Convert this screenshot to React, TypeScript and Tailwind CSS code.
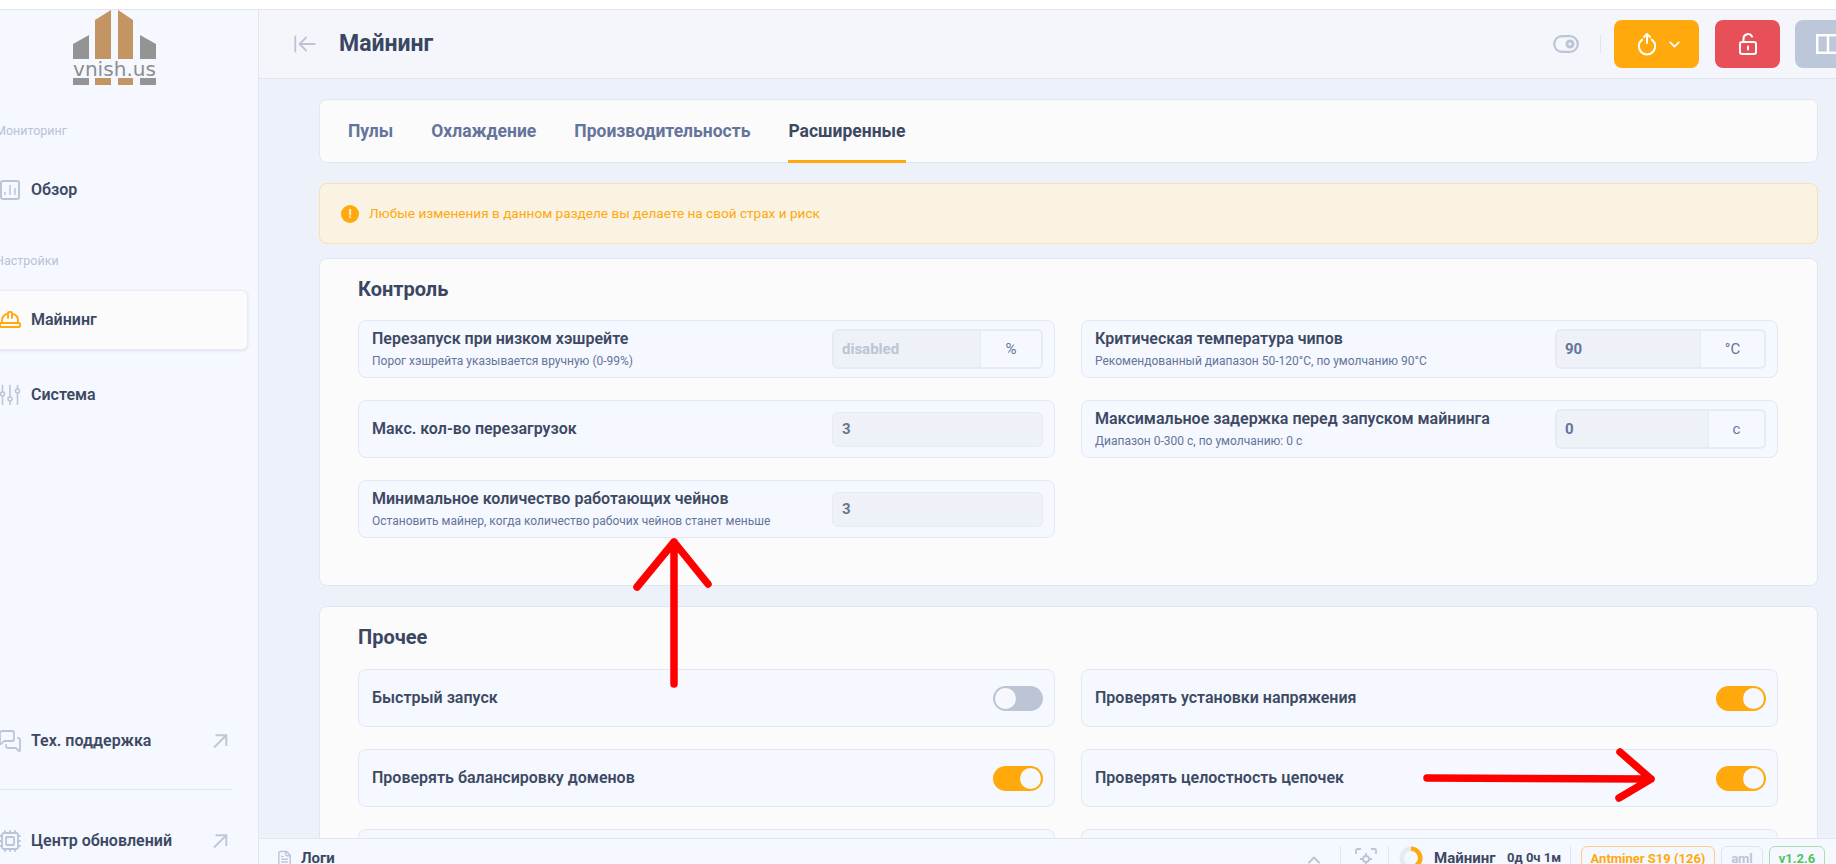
import React from "react";
import { ArrowLeftToLine, ChevronDown, ChevronUp, Cpu, FileText, HardHat, MessagesSquare } from "lucide-react";

const Logo = () => (
  <svg width="84" height="76" viewBox="0 0 84 76" className="block">
    <polygon points="0,34 16,25 16,49 0,49" fill="#949494" />
    <polygon points="22,10 38,0 38,49 22,49" fill="#c29562" />
    <polygon points="45,0 60,10 60,49 45,49" fill="#c29562" />
    <polygon points="67,25 83,34 83,49 67,49" fill="#949494" />
    <text x="0" y="66" textLength="83" lengthAdjust="spacingAndGlyphs" fill="#8e8e8e" fontFamily="'DejaVu Sans', sans-serif" fontWeight="500" fontSize="20">vnish.us</text>
    <rect x="0" y="68" width="16" height="7" fill="#949494" />
    <rect x="22" y="68" width="16" height="7" fill="#c29562" />
    <rect x="45" y="68" width="15" height="7" fill="#c29562" />
    <rect x="67" y="68" width="16" height="7" fill="#949494" />
  </svg>
);

const ArrowOut = () => (
  <svg width="16" height="16" viewBox="0 0 16 16" fill="none" stroke="#bfc7d6" strokeWidth="2" className="ml-auto mr-[30px] shrink-0">
    <path d="M2 14.500 14 2.500M3.500 2.200H14.300V13" />
  </svg>
);

const ChartIcon = () => (
  <svg width="20" height="22" viewBox="0 0 20 22" fill="none" stroke="#bcc5d5" strokeWidth="2" className="shrink-0">
    <rect x="1" y="2" width="18" height="18" rx="2" />
    <path d="M5 16v-3M10 16V6M15 16V9" strokeWidth="1.500" />
  </svg>
);

const SlidersIcon = () => (
  <svg width="20" height="22" viewBox="0 0 20 22" fill="none" stroke="#bcc5d5" strokeWidth="1.600" className="shrink-0">
    <path d="M2.500 1v7M2.500 12v9M10 1v12M10 17v4M17.500 1v4M17.500 9v12" />
    <circle cx="2.500" cy="10" r="2" />
    <circle cx="10" cy="15" r="2" />
    <circle cx="17.500" cy="7" r="2" />
  </svg>
);

const SideItem = ({ icon, label, extra, active }: { icon: React.ReactNode; label: string; extra?: React.ReactNode; active?: boolean }) => (
  <div className={"flex h-[60px] shrink-0 items-center gap-[11px] text-[16px] font-semibold text-[#3d4963] " + (active ? "-ml-3 w-[260px] rounded-md border border-[#e7ebf3] bg-[#fbfbfc] pl-[11px] shadow-[0_1px_3px_rgba(60,75,110,0.12)]" : "")}>
    {icon}
    <span>{label}</span>
    {extra}
  </div>
);

const Sidebar = () => (
  <aside className="flex w-[259px] shrink-0 flex-col overflow-hidden border-r border-[#e1e7f1] bg-[#f5f8ff]">
    <div className="h-[111px] shrink-0 pl-[73px]">
      <Logo />
    </div>
    <div className="-ml-[5px] h-5 shrink-0 text-[12.5px] leading-5 text-[#b9c3d3]">Мониторинг</div>
    <div className="mt-[19px] shrink-0">
      <SideItem icon={<ChartIcon />} label="Обзор" />
    </div>
    <div className="-ml-[5px] mt-[31px] h-5 shrink-0 text-[12.5px] leading-5 text-[#b9c3d3]">Настройки</div>
    <div className="mt-[19px] shrink-0">
      <SideItem active icon={<HardHat size={24} color="#ffa90c" strokeWidth={1.900} className="-ml-[2px] -mr-[2px] shrink-0" />} label="Майнинг" />
    </div>
    <div className="mt-[15px] shrink-0">
      <SideItem icon={<SlidersIcon />} label="Система" />
    </div>
    <div className="mt-[286px] shrink-0">
      <SideItem icon={<MessagesSquare size={24} color="#bcc5d5" strokeWidth={1.800} className="-ml-[2px] -mr-[2px] shrink-0" />} label="Тех. поддержка" extra={<ArrowOut />} />
    </div>
    <div className="mt-[18px] h-px w-[233px] shrink-0 bg-[#e2e8f3]" />
    <div className="mt-[21px] shrink-0">
      <SideItem icon={<Cpu size={24} color="#bcc5d5" strokeWidth={1.800} className="-ml-[2px] -mr-[2px] shrink-0" />} label="Центр обновлений" extra={<ArrowOut />} />
    </div>
  </aside>
);

const Header = () => (
  <header className="flex h-[69px] shrink-0 items-center border-b border-[#dfe6f0] bg-[#f4f6fb]">
    <ArrowLeftToLine size={26} strokeWidth={1.700} color="#bcc5d5" className="ml-[33px]" />
    <h1 className="ml-[21px] text-[23px] font-bold text-[#3a4662]">Майнинг</h1>
    <div className="ml-auto flex items-center">
      <svg width="26" height="18" viewBox="0 0 26 18" fill="none" stroke="#bcc5d5" className="mr-[21px]">
        <rect x="1.200" y="1.200" width="23.600" height="15.600" rx="7.800" strokeWidth="2.200" />
        <circle cx="17" cy="9" r="3" strokeWidth="3" />
      </svg>
      <div className="mr-[13px] h-[18px] w-px bg-[#dfe4ee]" />
      <button className="flex h-12 w-[85px] items-center justify-center gap-[9px] rounded-lg bg-[#ffa90c] pl-[7px]">
        <svg width="20" height="24" viewBox="0 0 20 24" fill="none" stroke="white" strokeWidth="2" strokeLinecap="round" strokeLinejoin="round">
          <path d="M5.200 7.600a8.200 8.200 0 1 0 9.600 0M10 11V2.500M7 5l3-3 3 3" />
        </svg>
        <ChevronDown size={17} color="white" strokeWidth={2.600} />
      </button>
      <button className="ml-4 flex h-12 w-[65px] items-center justify-center rounded-lg bg-[#e75058]">
        <svg width="20" height="22" viewBox="0 0 20 22" fill="none" stroke="white" strokeWidth="2" strokeLinecap="round">
          <rect x="2" y="9" width="16" height="12" rx="2" />
          <path d="M5.500 9V5.500a4.500 4.500 0 0 1 8.500-2M10 13.500v3" />
        </svg>
      </button>
      <button className="-mr-6 ml-[15px] flex h-12 w-[65px] items-center justify-center rounded-lg bg-[#bcc8da]">
        <svg width="24" height="20" viewBox="0 0 24 20" fill="none" stroke="white" strokeWidth="2.500">
          <rect x="1.200" y="1.200" width="21.600" height="17.600" />
          <path d="M12 1v18" />
        </svg>
      </button>
    </div>
  </header>
);

const Tabs = () => (
  <div className="flex h-16 items-stretch gap-[38px] rounded-lg border border-[#e1e7f1] bg-[#fbfbfc] pl-7 text-[17.5px] font-bold text-[#64749a]">
    {["Пулы", "Охлаждение", "Производительность"].map((t) => (
      <div key={t} className="flex items-center">{t}</div>
    ))}
    <div className="-mb-px flex items-center border-b-[3px] border-[#ffa90c] pt-[3px] text-[#3d4963]">Расширенные</div>
  </div>
);

const Warning = () => (
  <div className="mt-5 flex h-[61px] items-center gap-[10px] rounded-lg border border-[#fbdfae] bg-[#faf2e3] pl-[21px] text-[13.6px] text-[#ffa90c]">
    <span className="flex h-[18px] w-[18px] items-center justify-center rounded-full bg-[#ffa90c] text-[12px] font-bold leading-none text-[#faf2e3]">!</span>
    Любые изменения в данном разделе вы делаете на свой страх и риск
  </div>
);

const Field = ({ value, unit, unitClass, muted }: { value: string; unit?: string; unitClass?: string; muted?: boolean }) => {
  if (!unit)
    return (
      <div className="flex h-[35px] w-[211px] shrink-0 items-center rounded-md border border-[#e6eaf4] bg-[#eef1f8] pl-[9px] text-[15px] font-bold text-[#64749a]">{value}</div>
    );
  return (
    <div className="flex h-10 w-[211px] shrink-0 overflow-hidden rounded-md border-2 border-[#e6eaf4]">
      <div className={"flex flex-1 items-center bg-[#eef1f8] pl-2 text-[15px] font-bold " + (muted ? "text-[#bcc5d5]" : "text-[#64749a]")}>{value}</div>
      <div className={"flex shrink-0 items-center justify-center border-l border-[#e6eaf4] bg-[#f5f8ff] text-[15px] text-[#64749a] " + unitClass}>{unit}</div>
    </div>
  );
};

const Row = ({ title, sub, children }: { title: string; sub?: string; children: React.ReactNode }) => (
  <div className="flex h-[58px] items-center justify-between rounded-lg border border-[#e2e8f4] bg-[#f5f8ff] pl-[13px] pr-[11px]">
    <div>
      <div className="text-[16px] font-semibold leading-5 text-[#3d4963]">{title}</div>
      {sub && <div className="mt-[4px] text-[12px] leading-4 text-[#64749a]">{sub}</div>}
    </div>
    {children}
  </div>
);

const Toggle = ({ on }: { on?: boolean }) => (
  <div className={"flex h-[25px] w-[50px] shrink-0 items-center rounded-full px-[2px] " + (on ? "justify-end bg-[#ffa90c]" : "justify-start bg-[#bcc5d5]")}>
    <div className="h-[21px] w-[21px] rounded-full bg-[#f6f8fd]" />
  </div>
);

const Main = () => (
  <main className="relative flex min-w-0 flex-1 flex-col overflow-hidden bg-[#edf1f9]">
    <Header />
    <div className="min-h-0 flex-1 overflow-hidden pl-[60px] pr-[18px] pt-5">
      <Tabs />
      <Warning />
      <section className="mt-[14px] h-[328px] rounded-lg border border-[#e1e7f1] bg-[#fbfbfc] pl-[38px] pr-[39px]">
        <h2 className="flex h-[61px] items-center pb-[2px] text-[20px] font-bold text-[#3a4662]">Контроль</h2>
        <div className="grid grid-cols-2 gap-x-[26px] gap-y-[22px]">
          <Row title="Перезапуск при низком хэшрейте" sub="Порог хэшрейта указывается вручную (0-99%)"><Field value="disabled" unit="%" unitClass="w-[61px]" muted /></Row>
          <Row title="Критическая температура чипов" sub="Рекомендованный диапазон 50-120°C, по умолчанию 90°C"><Field value="90" unit="°C" unitClass="w-[64px]" /></Row>
          <Row title="Макс. кол-во перезагрузок"><Field value="3" /></Row>
          <Row title="Максимальное задержка перед запуском майнинга" sub="Диапазон 0-300 с, по умолчанию: 0 с"><Field value="0" unit="с" unitClass="w-[56px]" /></Row>
          <Row title="Минимальное количество работающих чейнов" sub="Остановить майнер, когда количество рабочих чейнов станет меньше"><Field value="3" /></Row>
        </div>
      </section>
      <section className="mt-5 rounded-lg border border-[#e1e7f1] bg-[#fbfbfc] pb-6 pl-[38px] pr-[39px]">
        <h2 className="flex h-[62px] items-center pb-[2px] text-[20px] font-bold text-[#3a4662]">Прочее</h2>
        <div className="grid grid-cols-2 gap-x-[26px] gap-y-[22px]">
          <Row title="Быстрый запуск"><Toggle /></Row>
          <Row title="Проверять установки напряжения"><Toggle on /></Row>
          <Row title="Проверять балансировку доменов"><Toggle on /></Row>
          <Row title="Проверять целостность цепочек"><Toggle on /></Row>
          <Row title=" "><Toggle on /></Row>
          <Row title=" "><Toggle on /></Row>
        </div>
      </section>
    </div>
    <footer className="flex h-[26px] shrink-0 items-start overflow-hidden whitespace-nowrap border-t border-[#e1e7f1] bg-[#f5f8ff] pl-[17px] pt-[7px] text-[15px] font-bold text-[#3d4963]">
      <FileText size={17} color="#bcc5d5" strokeWidth={2} className="mt-1" />
      <span className="ml-[8px] mt-[1px]">Логи</span>
      <ChevronUp size={20} color="#bcc5d5" strokeWidth={2.400} className="ml-auto mt-1" />
      <div className="ml-[16px] h-7 w-px bg-[#e1e7f1]" />
      <svg width="22" height="22" viewBox="0 0 22 22" fill="none" stroke="#bcc5d5" strokeWidth="1.800" className="ml-[14px] mt-[2px]">
        <path d="M1 6V2.500A1.500 1.500 0 0 1 2.500 1H6M16 1h3.500A1.500 1.500 0 0 1 21 2.500V6M21 16v3.500a1.500 1.500 0 0 1-1.500 1.500H16M6 21H2.500A1.500 1.500 0 0 1 1 19.500V16" />
        <circle cx="11" cy="11" r="3" />
        <path d="M11 5v3M11 14v3M5 11h3M14 11h3" />
      </svg>
      <div className="ml-[11px] h-7 w-px bg-[#e1e7f1]" />
      <svg width="24" height="24" viewBox="0 0 26 26" fill="none" strokeWidth="5" className="ml-[10px] shrink-0">
        <circle cx="13" cy="13" r="10" stroke="#e6eaf4" />
        <path d="M13 3a10 10 0 0 1 6 18" stroke="#ffa90c" />
      </svg>
      <span className="ml-[11px] mt-[1px] w-[62px] shrink-0">Майнинг</span>
      <span className="ml-[11px] mt-[2px] w-[53px] shrink-0 text-[13px]">0д 0ч 1м</span>
      <div className="ml-[10px] h-7 w-px shrink-0 bg-[#e1e7f1]" />
      <span className="ml-[10px] flex h-[26px] w-[134px] shrink-0 items-center justify-center rounded-md border border-[#ffcf80] text-[13px] text-[#ffa90c]">Antminer S19 (126)</span>
      <span className="ml-[6px] flex h-[26px] w-[42px] shrink-0 items-center justify-center rounded-md border border-[#dde3ee] text-[13px] text-[#bcc5d5]">aml</span>
      <span className="ml-[6px] mr-[11px] flex h-[26px] w-[56px] shrink-0 items-center justify-center rounded-md border border-[#a5e0ae] text-[13px] text-[#4fc45f]">v1.2.6</span>
    </footer>
    <svg width="1836" height="864" viewBox="0 0 1836 864" fill="none" stroke="#ff0000" strokeWidth="7.500" strokeLinecap="round" strokeLinejoin="round" className="pointer-events-none absolute -left-[259px] -top-[10px]">
      <path d="M674 684V542M637 587 674 542 708 584" />
      <path d="M1427 778 1651 779M1620 752 1651 779 1619 798" />
    </svg>
  </main>
);

export default function App() {
  return (
    <div className="flex h-[864px] w-[1836px] flex-col overflow-hidden bg-white font-['Roboto',sans-serif]">
      <div className="h-[10px] shrink-0 border-b border-[#e3e5e8] bg-white" />
      <div className="flex min-h-0 flex-1">
        <Sidebar />
        <Main />
      </div>
    </div>
  );
}
